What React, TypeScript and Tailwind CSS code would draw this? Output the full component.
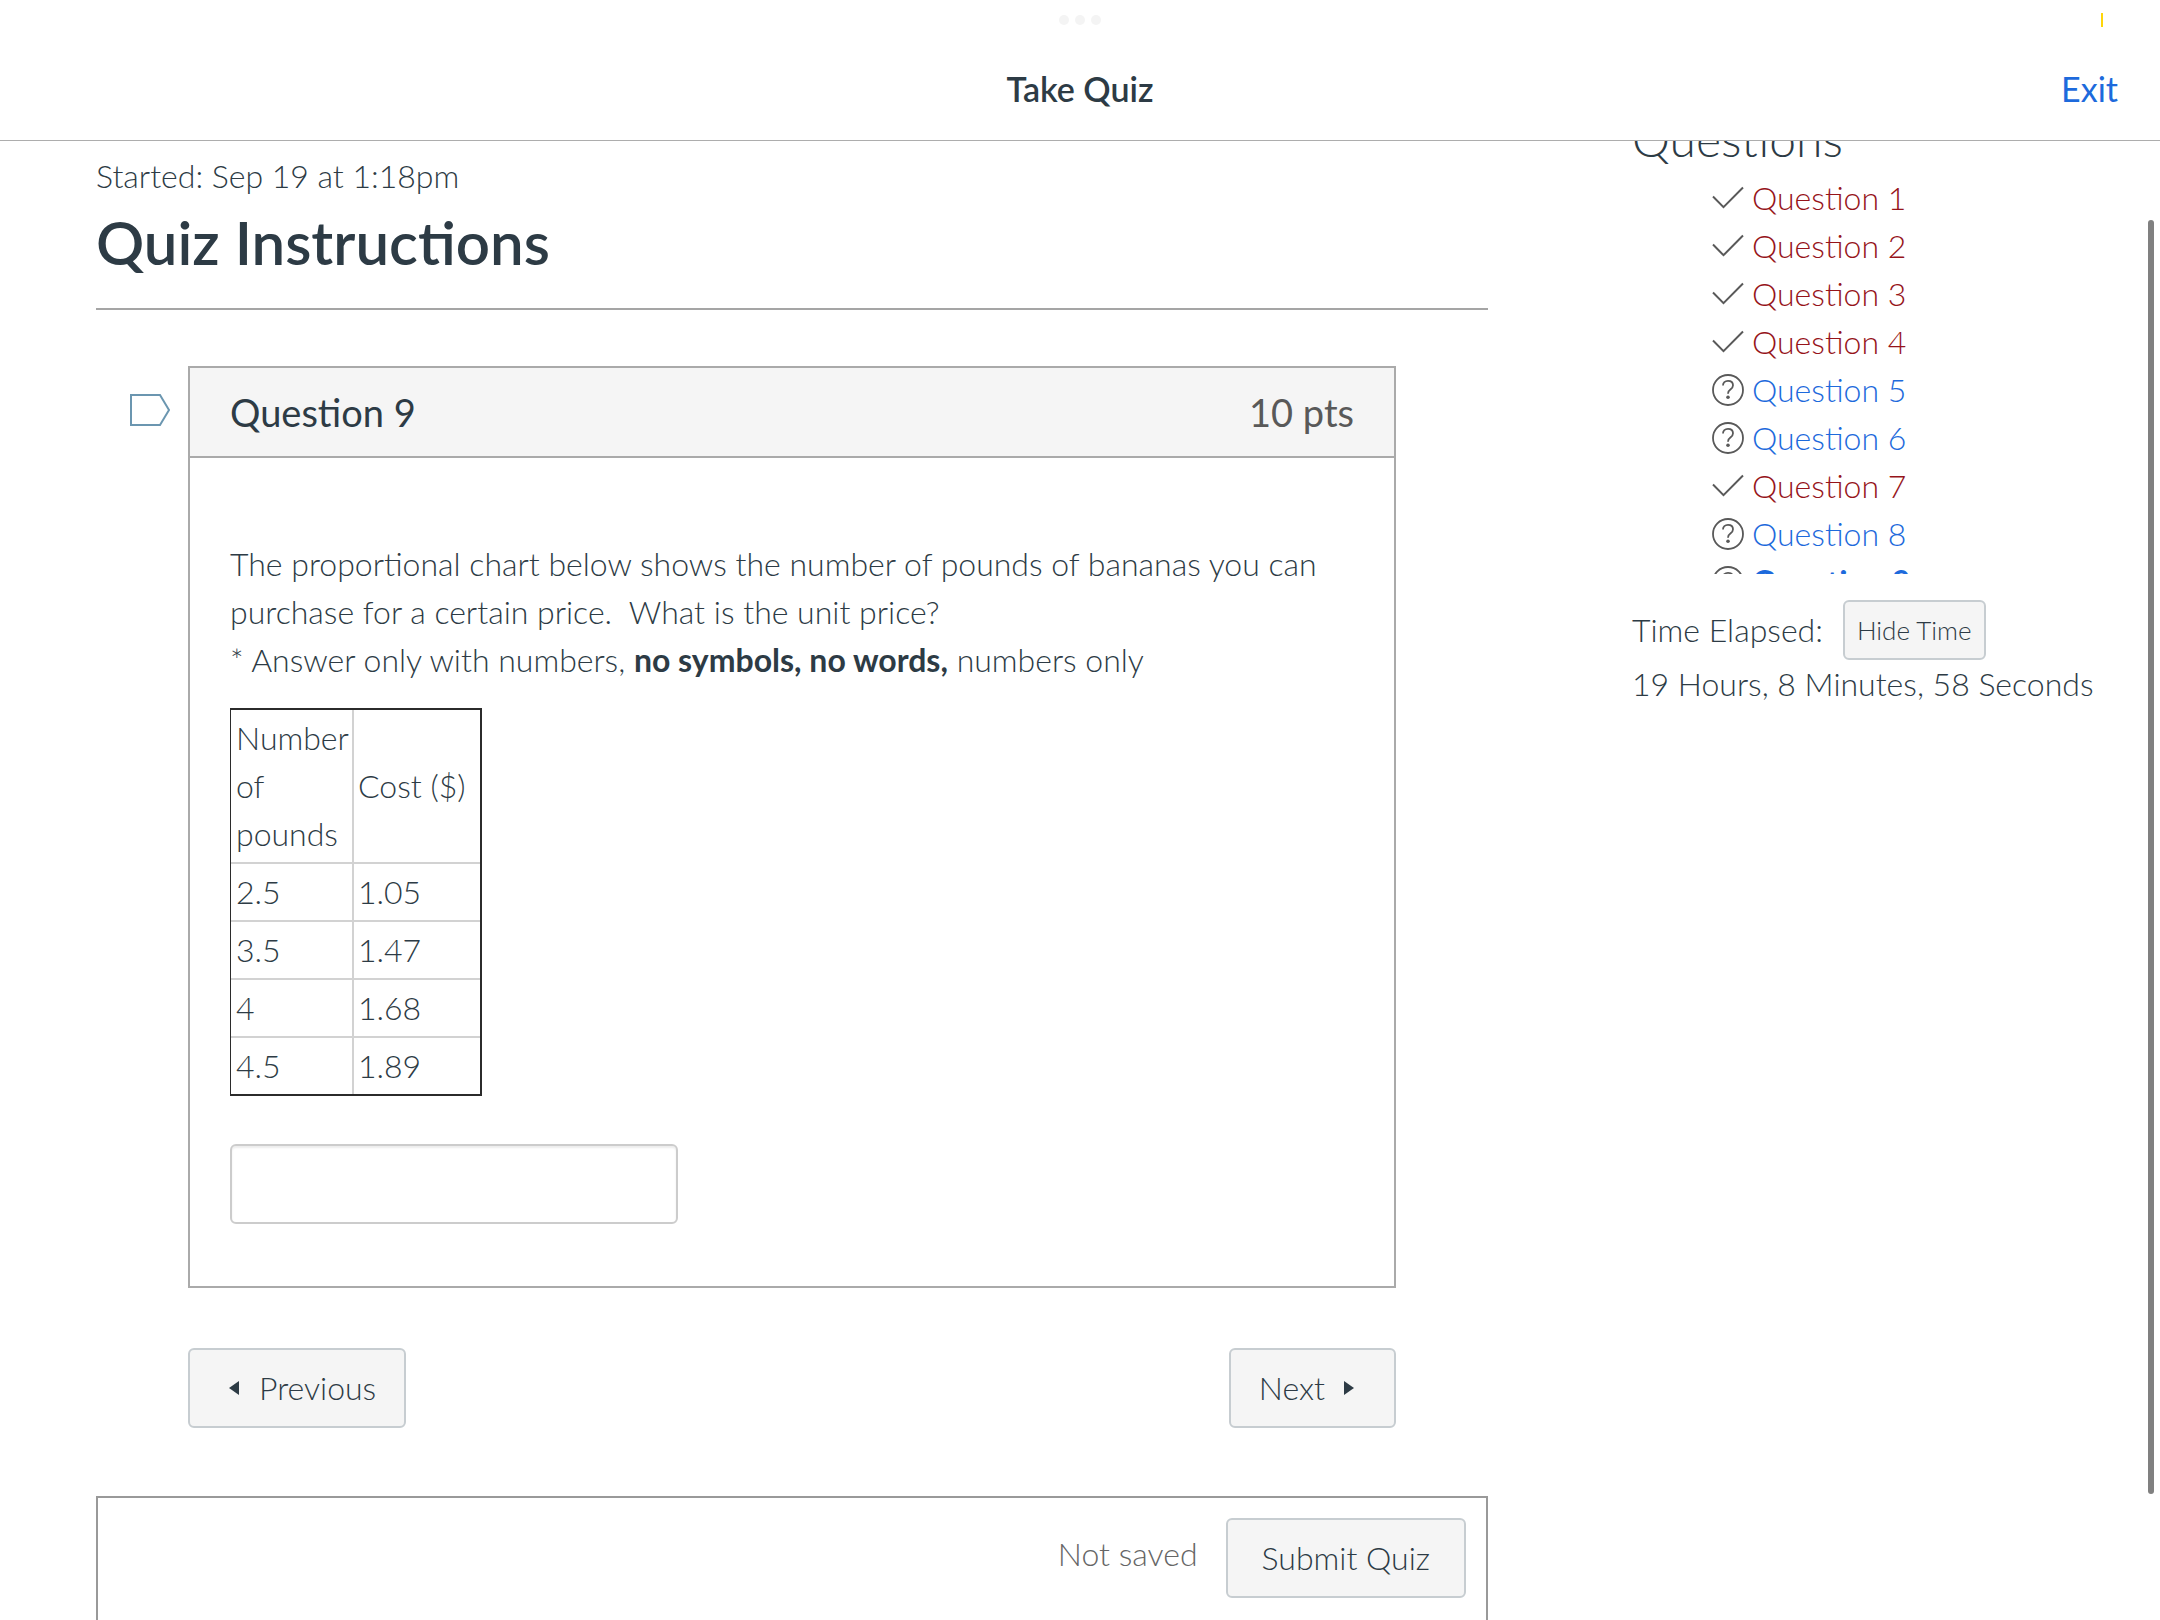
import { useState } from 'react';

type QuestionLink = {
  id: number;
  answered: boolean;
};

const questions: QuestionLink[] = [
  { id: 1, answered: true },
  { id: 2, answered: true },
  { id: 3, answered: true },
  { id: 4, answered: true },
  { id: 5, answered: false },
  { id: 6, answered: false },
  { id: 7, answered: true },
  { id: 8, answered: false },
  { id: 9, answered: false },
];

const prices = [
  ['2.5', '1.05'],
  ['3.5', '1.47'],
  ['4', '1.68'],
  ['4.5', '1.89'],
];

const CURRENT = 9;

const buttonClass =
  'flex h-20 items-center rounded-md border-2 border-[#c7cdd1] bg-[#f5f5f5] text-[32px] leading-[48px]';

function CheckIcon() {
  return (
    <svg className="h-8 w-8 shrink-0" viewBox="0 0 32 32" fill="none" stroke="#595959" strokeWidth="2" aria-hidden="true">
      <path d="M1 14.5 11.5 25.2 31 5.5" />
    </svg>
  );
}

function HelpIcon() {
  return (
    <svg className="h-8 w-8 shrink-0" viewBox="0 0 32 32" fill="none" stroke="#595959" strokeWidth="1.8" aria-hidden="true">
      <circle cx="16" cy="16" r="15" />
      <path d="M11 11.5C11 8.6 13 6.8 16 6.8s5 1.8 5 4.5c0 2.3-1.2 3.3-2.6 4.3-1.6 1.1-2.4 2-2.4 4.2" />
      <circle cx="16" cy="23.3" r="1.8" fill="#595959" stroke="none" />
    </svg>
  );
}

function Header() {
  return (
    <header className="relative shrink-0 border-b border-[#adadad] bg-white pt-10">
      <div className="absolute inset-x-0 top-[15px] flex justify-center gap-1.5">
        <span className="size-2.5 rounded-full bg-[#f4f4f4]" />
        <span className="size-2.5 rounded-full bg-[#f4f4f4]" />
        <span className="size-2.5 rounded-full bg-[#f4f4f4]" />
      </div>
      <span className="absolute top-[13px] right-[57px] h-3.5 w-0.5 bg-[#ffd60a]" />
      <div className="grid h-[100px] grid-cols-3 items-center px-[42px] pb-0.5 text-[34px]">
        <h1 className="col-start-2 text-center font-semibold">Take Quiz</h1>
        <a href="#exit" className="justify-self-end font-normal text-[#1d6adc]">Exit</a>
      </div>
    </header>
  );
}

function QuestionCard() {
  const [answer, setAnswer] = useState('');

  return (
    <section className="mx-[92px] border-2 border-[#aaaaaa]">
      <div className="flex h-[90px] items-center justify-between border-b-2 border-[#aaaaaa] bg-[#f5f5f5] px-10">
        <h3 className="text-[38px] font-normal">Question 9</h3>
        <span className="text-[38px] font-normal text-[#595959]">10 pts</span>
      </div>
      <div className="px-10 pt-[82px] pb-[62px]">
        <p>
          The proportional chart below shows the number of pounds of bananas you can purchase for a certain price.&nbsp; What is the unit price?
          <br />
          * Answer only with numbers, <strong className="font-bold">no symbols, no words,</strong> numbers only
        </p>
        <table className="mt-6 w-[252px] table-fixed border-separate border-spacing-0 border-2 border-l border-[#2b2b2b]">
          <thead>
            <tr>
              <th scope="col" className="w-[123px] border-r-2 border-b-2 border-[#d2d2d2] py-1 pl-[5px] text-left font-light">Number of pounds</th>
              <th scope="col" className="border-b-2 border-[#d2d2d2] px-1 py-1 text-left font-light">Cost ($)</th>
            </tr>
          </thead>
          <tbody className="[&>tr:last-child>td]:border-b-0">
            {prices.map(([pounds, cost]) => (
              <tr key={pounds}>
                <td className="border-r-2 border-b-2 border-[#d2d2d2] py-1 pl-[5px]">{pounds}</td>
                <td className="border-b-2 border-[#d2d2d2] px-1 py-1">{cost}</td>
              </tr>
            ))}
          </tbody>
        </table>
        <input
          type="text"
          aria-label="Answer"
          value={answer}
          onChange={(e) => setAnswer(e.target.value)}
          className="mt-12 block h-20 w-[448px] rounded-md border-2 border-[#cccccc] px-3 shadow-[inset_0_2px_2px_rgba(0,0,0,0.075)]"
        />
      </div>
    </section>
  );
}

function Sidebar() {
  return (
    <aside className="-mt-[30px] w-[528px] shrink-0">
      <h2 className="text-[48px] leading-[56px]">Questions</h2>
      <ul className="mt-[7px] h-[400px] overflow-hidden pl-20">
        {questions.map((q) => (
          <li key={q.id} className="flex items-center gap-2">
            {q.answered ? <CheckIcon /> : <HelpIcon />}
            <a
              href={`#question-${q.id}`}
              className={`${q.answered ? 'text-[#96141a]' : 'text-[#1d6adc]'} ${q.id === CURRENT ? 'font-bold' : ''}`}
            >
              Question {q.id}
            </a>
          </li>
        ))}
      </ul>
      <div className="mt-[26px] flex items-center gap-5">
        <span>Time Elapsed:</span>
        <button type="button" className="h-[60px] rounded-md border-2 border-[#c7cdd1] bg-[#f5f5f5] px-3 text-[26px]">
          Hide Time
        </button>
      </div>
      <div>19 Hours, 8 Minutes, 58 Seconds</div>
    </aside>
  );
}

export default function App() {
  return (
    <div className="flex h-screen flex-col overflow-hidden bg-white font-['Lato',sans-serif] text-[32px] leading-[48px] font-light text-[#2d3b45]">
      <Header />
      <div className="relative flex min-h-0 flex-1 gap-36 overflow-hidden pl-24">
        <main className="flex min-w-0 flex-1 flex-col pt-[11px]">
          <p>Started: Sep 19 at 1:18pm</p>
          <h2 className="text-[60px] leading-[84px] font-semibold">Quiz Instructions</h2>
          <hr className="mt-6 border-t-2 border-[#a5a5a5]" />

          <div className="relative mt-14">
            <button type="button" aria-label="Flag question" className="absolute top-[27px] left-8">
              <svg className="h-9 w-11" viewBox="0 0 44 36" fill="none" stroke="#6b96b0" strokeWidth="2" aria-hidden="true">
                <path d="M3 2H32L41 17 32 32H3Z" />
              </svg>
            </button>
            <QuestionCard />
          </div>

          <div className="mx-[92px] mt-[60px] flex justify-between">
            <button type="button" className={`${buttonClass} gap-5 pr-7 pl-[39px]`}>
              <svg className="h-3.5 w-2.5" viewBox="0 0 10 14" fill="#2d3b45" aria-hidden="true">
                <path d="M0 7 10 0V14Z" />
              </svg>
              Previous
            </button>
            <button type="button" className={`${buttonClass} gap-[19px] pr-10 pl-7`}>
              Next
              <svg className="h-3.5 w-2.5" viewBox="0 0 10 14" fill="#2d3b45" aria-hidden="true">
                <path d="M10 7 0 0V14Z" />
              </svg>
            </button>
          </div>

          <div className="mt-[68px] flex flex-1 items-start justify-end gap-7 border-2 border-b-0 border-[#999999] px-5 pt-5">
            <span className="mt-3 text-[#666666]">Not saved</span>
            <button type="button" className={`${buttonClass} px-[34px]`}>Submit Quiz</button>
          </div>
        </main>
        <Sidebar />
        <div className="absolute top-[79px] right-1.5 bottom-[126px] w-1.5 rounded-full bg-[#808080]" />
      </div>
    </div>
  );
}
